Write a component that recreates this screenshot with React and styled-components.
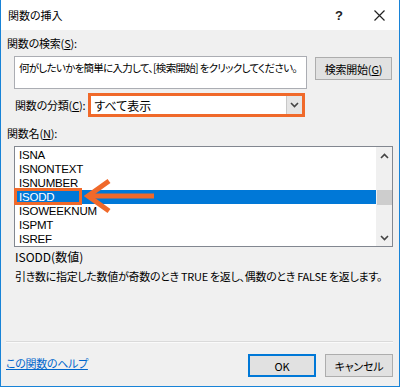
import React from "react";
import styled, { createGlobalStyle } from "styled-components";

const Global = createGlobalStyle`
  html, body { margin: 0; padding: 0; background: #ffffff; }
  body {
    font-family: "Noto Sans CJK JP", "Noto Sans", sans-serif;
    font-feature-settings: "palt";
    -webkit-font-smoothing: antialiased;
  }
`;

const ORANGE = "#f0692a";

const Window = styled.div`
  width: 400px;
  height: 387px;
  box-sizing: border-box;
  border: 1px solid #1883d7;
  border-top: none;
  background: #f0f0f0;
  display: flex;
  flex-direction: column;
  font-size: 11px;
  color: #000;
`;

const TitleBar = styled.div`
  height: 30px;
  background: #ffffff;
  display: flex;
  align-items: center;
  padding-left: 7px;
  flex-shrink: 0;
`;

const Title = styled.div`
  flex: 1;
  font-size: 11px;
  line-height: 16px;
`;

const TitleButton = styled.div`
  width: 40px;
  display: flex;
  justify-content: center;
  align-items: center;
  font-size: 13px;
  font-family: "Liberation Sans", sans-serif;
  font-weight: bold;
  color: #222;
`;

const Content = styled.div`
  flex: 1;
  display: flex;
  flex-direction: column;
  padding: 0 6px 0 5px;
`;

const Label = styled.div`
  line-height: 16px;
  margin-top: ${(p) => p.$mt || 0}px;
  padding-left: ${(p) => p.$pl ?? 1}px;
  letter-spacing: -0.2px;
  white-space: nowrap;
`;

const U = styled.span`
  text-decoration: underline;
  text-underline-offset: 1px;
`;

const SearchRow = styled.div`
  display: flex;
  align-items: flex-start;
  margin-top: 5px;
  padding-left: 8px;
`;

const SearchBox = styled.div`
  width: 293px;
  height: 33px;
  box-sizing: border-box;
  background: #fff;
  border: 1px solid #abadb3;
  padding: 3px 0 0 4px;
  line-height: 16px;
  font-size: 10.5px;
  letter-spacing: -0.7px;
  white-space: nowrap;
  overflow: hidden;
`;

const Button = styled.div`
  box-sizing: border-box;
  width: ${(p) => p.$w}px;
  height: 23px;
  margin-left: ${(p) => p.$ml || 0}px;
  margin-top: ${(p) => p.$mt || 0}px;
  background: #e1e1e1;
  border: ${(p) => (p.$default ? "2px solid #0078d7" : "1px solid #adadad")};
  display: flex;
  align-items: center;
  justify-content: center;
  font-size: 11px;
  letter-spacing: -0.2px;
  white-space: nowrap;
`;

const CategoryRow = styled.div`
  display: flex;
  align-items: center;
  margin-top: 4px;
  padding-left: 9px;
`;

const Select = styled.div`
  margin-left: 3px;
  width: 217px;
  height: 24px;
  box-sizing: border-box;
  border: 3px solid ${ORANGE};
  background: #fff;
  display: flex;
  align-items: stretch;
`;

const SelectText = styled.div`
  flex: 1;
  padding-left: 3px;
  font-size: 12px;
  display: flex;
  align-items: center;
`;

const SelectArrow = styled.div`
  width: 15px;
  background: #e5e5e5;
  border-left: 1px solid #c8c8c8;
  display: flex;
  align-items: center;
  justify-content: center;
`;

const List = styled.div`
  position: relative;
  margin-top: 5px;
  margin-left: 8px;
  width: 379px;
  height: 101px;
  box-sizing: border-box;
  border: 1px solid #828790;
  background: #fff;
  display: flex;
`;

const Items = styled.div`
  flex: 1;
  padding-top: 1px;
`;

const Item = styled.div`
  height: 14px;
  line-height: 14px;
  padding-left: 4px;
  font-family: "Liberation Sans", Arial, sans-serif;
  font-size: 11.5px;
  letter-spacing: -0.2px;
  background: ${(p) => (p.$selected ? "#0078d7" : "transparent")};
  color: ${(p) => (p.$selected ? "#fff" : "#000")};
`;

const Scrollbar = styled.div`
  width: 16px;
  background: #f0f0f0;
  display: flex;
  flex-direction: column;
  align-items: center;
`;

const ScrollArrow = styled.div`
  height: 17px;
  width: 16px;
  display: flex;
  align-items: center;
  justify-content: center;
`;

const ScrollTrack = styled.div`
  flex: 1;
  width: 16px;
  padding-top: 26px;
  box-sizing: border-box;
`;

const Thumb = styled.div`
  width: 15px;
  margin-left: 1px;
  height: 15px;
  background: #cdcdcd;
`;

const HighlightBox = styled.div`
  position: absolute;
  left: -1px;
  top: 41px;
  width: 68px;
  height: 17px;
  box-sizing: border-box;
  border: 3px solid ${ORANGE};
`;

const ArrowSvg = styled.svg`
  position: absolute;
  left: 69px;
  top: 31px;
`;

const Signature = styled.div`
  margin-top: 2px;
  padding-left: 9px;
  line-height: 16px;
  font-size: 12px;
`;

const Description = styled.div`
  margin-top: 3px;
  padding-left: 9px;
  line-height: 16px;
  letter-spacing: -0.3px;
  white-space: nowrap;
`;

const Separator = styled.div`
  margin-top: auto;
  height: 1px;
  background: #dadada;
  border-bottom: 1px solid #fafafa;
`;

const Footer = styled.div`
  display: flex;
  align-items: flex-start;
  height: 43px;
  padding-top: 11px;
  box-sizing: border-box;
`;

const HelpLink = styled.a`
  margin-top: 1px;
  line-height: 16px;
  color: #0066cc;
  text-decoration: underline;
  letter-spacing: -0.3px;
  flex: 1;
`;

const Chevron = ({ up }) => (
  <svg width="9" height="6" viewBox="0 0 9 6">
    <polyline
      points={up ? "1,5 4.5,1.5 8,5" : "1,1 4.5,4.5 8,1"}
      fill="none"
      stroke="#444"
      strokeWidth="1.6"
    />
  </svg>
);

const items = ["ISNA", "ISNONTEXT", "ISNUMBER", "ISODD", "ISOWEEKNUM", "ISPMT", "ISREF"];

export default function App() {
  return (
    <>
      <Global />
      <Window>
        <TitleBar>
          <Title>関数の挿入</Title>
          <TitleButton>?</TitleButton>
          <TitleButton>
            <svg width="11" height="11" viewBox="0 0 11 11">
              <path d="M0.5 0.5 L10.5 10.5 M10.5 0.5 L0.5 10.5" stroke="#222" strokeWidth="1.2" />
            </svg>
          </TitleButton>
        </TitleBar>
        <Content>
          <Label $mt={5}>
            関数の検索(<U>S</U>):
          </Label>
          <SearchRow>
            <SearchBox>何がしたいかを簡単に入力して、[検索開始] をクリックしてください。</SearchBox>
            <Button $w={77} $ml={8} $mt={1}>
              検索開始(<U>G</U>)
            </Button>
          </SearchRow>
          <CategoryRow>
            <Label $pl={0}>
              関数の分類(<U>C</U>):
            </Label>
            <Select>
              <SelectText>すべて表示</SelectText>
              <SelectArrow>
                <Chevron />
              </SelectArrow>
            </Select>
          </CategoryRow>
          <Label $mt={8}>
            関数名(<U>N</U>):
          </Label>
          <List>
            <Items>
              {items.map((it) => (
                <Item key={it} $selected={it === "ISODD"}>
                  {it}
                </Item>
              ))}
            </Items>
            <Scrollbar>
              <ScrollArrow>
                <Chevron up />
              </ScrollArrow>
              <ScrollTrack>
                <Thumb />
              </ScrollTrack>
              <ScrollArrow>
                <Chevron />
              </ScrollArrow>
            </Scrollbar>
            <HighlightBox />
            <ArrowSvg width="72" height="38" viewBox="0 0 72 38">
              <polyline points="25,3 4,18 25,33" fill="none" stroke={ORANGE} strokeWidth="5" strokeLinejoin="miter" />
              <line x1="6" y1="18" x2="70" y2="18" stroke={ORANGE} strokeWidth="5" />
            </ArrowSvg>
          </List>
          <Signature>ISODD(数値)</Signature>
          <Description>引き数に指定した数値が奇数のとき TRUE を返し、偶数のとき FALSE を返します。</Description>
          <Separator />
          <Footer>
            <HelpLink href="#">この関数のヘルプ</HelpLink>
            <Button $w={68} $default>
              OK
            </Button>
            <Button $w={68} $ml={9}>
              キャンセル
            </Button>
          </Footer>
        </Content>
      </Window>
    </>
  );
}
